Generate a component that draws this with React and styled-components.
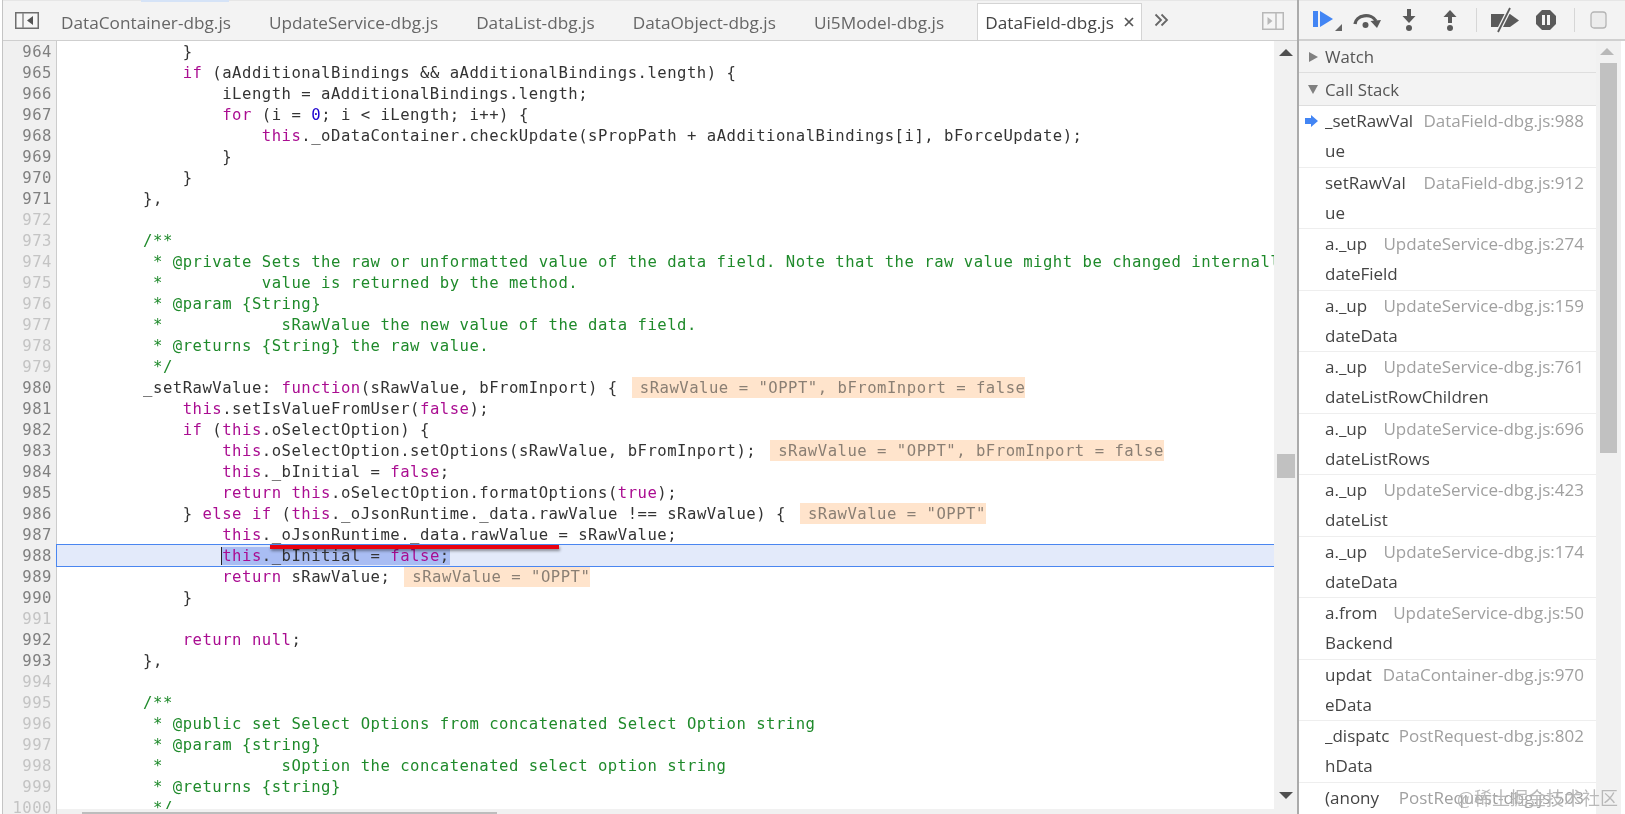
import React from "react";
import styled, { createGlobalStyle } from "styled-components";

const Global = createGlobalStyle`
  html, body { margin: 0; padding: 0; height: 100%; overflow: hidden; background: #fff; }
  #root { height: 814px; }
`;

const Page = styled.div`
  position: relative;
  width: 1625px;
  height: 814px;
  display: flex;
  overflow: hidden;
  background: #fff;
  font-family: "Open Sans", "Noto Sans", sans-serif;
  filter: blur(0.35px);
`;

const SourcePane = styled.div`
  flex: none;
  width: 1295px;
  margin-left: 2px;
  box-sizing: border-box;
  display: flex;
  flex-direction: column;
  border-left: 1px solid #c4c4c4;
`;

const TabBar = styled.div`
  height: 41px;
  flex: none;
  box-sizing: border-box;
  display: flex;
  align-items: flex-end;
  background: #f3f3f3;
  border-top: 1px solid #e6e6e6;
  border-bottom: 1px solid #cfcfcf;
  position: relative;
`;

const LoadingStrip = styled.div`
  position: absolute;
  left: 138px;
  top: -1px;
  width: 88px;
  height: 2px;
  background: #d5e3f7;
`;

const IconSlot = styled.div`
  width: ${(p) => p.$w}px;
  margin-left: ${(p) => p.$ml};
  margin-right: ${(p) => p.$mr || 0}px;
  flex: none;
  align-self: center;
  display: flex;
  align-items: center;
  justify-content: center;
`;

const Tab = styled.div`
  flex: none;
  box-sizing: border-box;
  height: 37px;
  margin-left: ${(p) => p.$ml}px;
  padding: 0 ${(p) => (p.$active ? 7 : 0)}px;
  display: flex;
  align-items: center;
  gap: 10px;
  font-size: 17.2px;
  letter-spacing: 0.02px;
  color: ${(p) => (p.$active ? "#444" : "#666")};
  background: ${(p) => (p.$active ? "#fff" : "transparent")};
  border: ${(p) => (p.$active ? "1px solid #d4d4d4" : "1px solid transparent")};
  border-bottom: none;
`;

const More = styled.svg`
  flex: none;
  display: block;
  align-self: flex-start;
  margin: 12px 0 0 12px;
`;

const EditorBody = styled.div`
  flex: 1;
  min-height: 0;
  display: flex;
  position: relative;
`;

const Code = styled.div`
  flex: 1;
  min-width: 0;
  overflow: hidden;
  font-family: "DejaVu Sans Mono", "Liberation Mono", monospace;
  font-size: 15.6px;
  letter-spacing: 0.5px;
  color: #333;
`;

const Row = styled.div`
  height: 21px;
  line-height: 22px;
  display: flex;
  white-space: pre;
  position: relative;
  ${(p) => p.$current && `z-index: 1;`}
`;

const Gutter = styled.div`
  width: 54px;
  flex: none;
  box-sizing: border-box;
  padding-right: 4px;
  text-align: right;
  background: #f0f0f0;
  border-right: 1px solid #cccccc;
  color: ${(p) => (p.$dim ? "#c4c4c4" : "#808080")};
`;

const Line = styled.div`
  flex: 1;
  min-width: 0;
  padding-left: 7px;
  overflow: hidden;
  box-sizing: border-box;
  ${(p) =>
    p.$current &&
    `
    background: #e3eafa;
    box-shadow: 0 0 0 1px #4a86f0;
  `}
`;

const Keyword = styled.span`color: #aa0d91;`;
const Num = styled.span`color: #1c00cf;`;
const Comment = styled.span`color: #1f8a2b;`;
const Selected = styled.span`
  background: #a9bdf3;
  box-shadow: -1px 0 0 #222;
`;
const Pill = styled.span`
  display: inline-block;
  margin-left: 14px;
  padding-left: 8px;
  background: #ffe4cc;
  color: #8a7f74;
`;

const VScroll = styled.div`
  width: 23px;
  flex: none;
  background: #f1f1f1;
  position: relative;
`;

const Thumb = styled.div`
  width: 18px;
  height: 24px;
  background: #c1c1c1;
  position: absolute;
  top: 413px;
  left: 3px;
`;

const Arrow = styled.div`
  position: absolute;
  top: ${(p) => p.$top}px;
  left: ${(p) => p.$left}px;
  width: 0;
  height: 0;
  border-left: 7px solid transparent;
  border-right: 7px solid transparent;
  ${(p) =>
    p.$down
      ? `border-top: 7px solid ${p.$c || "#505050"};`
      : `border-bottom: 7px solid ${p.$c || "#505050"};`}
`;

const HScroll = styled.div`
  position: absolute;
  left: 54px;
  right: 23px;
  bottom: 0;
  height: 5px;
  z-index: 2;
  background: #f1f1f1;
  display: flex;
  align-items: flex-end;
  padding-left: 25px;
`;

const HThumb = styled.div`
  height: 2px;
  width: 415px;
  background: #bdbdbd;
`;

const Sidebar = styled.div`
  flex: 1;
  min-width: 0;
  display: flex;
  flex-direction: column;
  border-left: 2px solid #ababab;
`;

const DebugBar = styled.div`
  height: 41px;
  flex: none;
  box-sizing: border-box;
  background: #f3f3f3;
  border-bottom: 2px solid #d0d0d0;
  border-top: 1px solid #e6e6e6;
  display: flex;
  align-items: center;
  padding-left: 14px;
`;

const ToolIcon = styled.svg`
  flex: none;
  margin-left: ${(p) => p.$ml || 0}px;
  margin-top: -1px;
  display: block;
`;

const ToolSep = styled.div`
  width: 1px;
  height: 24px;
  flex: none;
  background: #d6d6d6;
  margin-left: ${(p) => p.$ml}px;
`;

const SideBody = styled.div`
  flex: 1;
  min-height: 0;
  display: flex;
`;

const SideMain = styled.div`
  width: 297px;
  flex: none;
  overflow: hidden;
`;

const SectionHead = styled.div`
  height: ${(p) => p.$h}px;
  box-sizing: border-box;
  background: #f3f3f3;
  border-bottom: 1px solid #dedede;
  display: flex;
  align-items: center;
  gap: 7px;
  padding-left: 9px;
  font-size: 16.8px;
  color: #555;
`;

const Caret = styled.span`
  width: 0;
  height: 0;
  flex: none;
  ${(p) =>
    p.$open
      ? `border-left: 5px solid transparent; border-right: 5px solid transparent; border-top: 9px solid #808080;`
      : `border-top: 5px solid transparent; border-bottom: 5px solid transparent; border-left: 9px solid #808080; margin-left: 1px;`}
`;

const Frame = styled.div`
  height: 61.55px;
  box-sizing: border-box;
  padding: 0 12px 0 26px;
  border-bottom: 1px solid #eeeeee;
  font-size: 17px;
  line-height: 30px;
  color: #444;
  position: relative;
`;

const FrameTop = styled.div`
  display: flex;
  justify-content: space-between;
  white-space: nowrap;
`;

const FrameFile = styled.span`
  color: #a0a0a0;
`;

const FrameMarker = styled.svg`
  position: absolute;
  left: 6px;
  top: 9px;
`;

const SideScroll = styled.div`
  width: 25px;
  flex: none;
  background: #f1f1f1;
  position: relative;
`;

const SideThumb = styled.div`
  position: absolute;
  top: 22px;
  left: 4px;
  width: 17px;
  height: 390px;
  background: #c1c1c1;
`;

const Watermark = styled.div`
  position: absolute;
  right: 7px;
  bottom: 5px;
  font-family: "Noto Sans CJK SC", sans-serif;
  font-size: 18px;
  line-height: 24px;
  color: rgba(130, 130, 130, 0.55);
  text-shadow: 0 0 1px rgba(255, 255, 255, 0.8);
  white-space: nowrap;
`;

const RedMark = styled.div`
  position: absolute;
  left: 270px;
  top: 545px;
  width: 289px;
  height: 4px;
  background: #e8000f;
  box-shadow: 1px 2px 3px rgba(0, 0, 0, 0.4);
  z-index: 3;
`;

const pillBoth = 'sRawValue = "OPPT", bFromInport = false';
const pillOne = 'sRawValue = "OPPT"';

const lines = [
  [964, "            }"],
  [965, "            if (aAdditionalBindings && aAdditionalBindings.length) {"],
  [966, "                iLength = aAdditionalBindings.length;"],
  [967, "                for (i = 0; i < iLength; i++) {"],
  [968, "                    this._oDataContainer.checkUpdate(sPropPath + aAdditionalBindings[i], bForceUpdate);"],
  [969, "                }"],
  [970, "            }"],
  [971, "        },"],
  [972, "", { dim: true }],
  [973, "        /**", { c: true, dim: true }],
  [974, "         * @private Sets the raw or unformatted value of the data field. Note that the raw value might be changed internally", { c: true, dim: true }],
  [975, "         *          value is returned by the method.", { c: true, dim: true }],
  [976, "         * @param {String}", { c: true, dim: true }],
  [977, "         *            sRawValue the new value of the data field.", { c: true, dim: true }],
  [978, "         * @returns {String} the raw value.", { c: true, dim: true }],
  [979, "         */", { c: true, dim: true }],
  [980, "        _setRawValue: function(sRawValue, bFromInport) {", { pill: pillBoth }],
  [981, "            this.setIsValueFromUser(false);"],
  [982, "            if (this.oSelectOption) {"],
  [983, "                this.oSelectOption.setOptions(sRawValue, bFromInport);", { pill: pillBoth }],
  [984, "                this._bInitial = false;"],
  [985, "                return this.oSelectOption.formatOptions(true);"],
  [986, "            } else if (this._oJsonRuntime._data.rawValue !== sRawValue) {", { pill: pillOne }],
  [987, "                this._oJsonRuntime._data.rawValue = sRawValue;"],
  [988, "                this._bInitial = false;", { current: true }],
  [989, "                return sRawValue;", { pill: pillOne }],
  [990, "            }"],
  [991, "", { dim: true }],
  [992, "            return null;"],
  [993, "        },"],
  [994, "", { dim: true }],
  [995, "        /**", { c: true, dim: true }],
  [996, "         * @public set Select Options from concatenated Select Option string", { c: true, dim: true }],
  [997, "         * @param {string}", { c: true, dim: true }],
  [998, "         *            sOption the concatenated select option string", { c: true, dim: true }],
  [999, "         * @returns {string}", { c: true, dim: true }],
  [1000, "         */", { c: true, dim: true }],
];

const frames = [
  ["_setRawVal", "ue", "DataField-dbg.js:988", true],
  ["setRawVal", "ue", "DataField-dbg.js:912"],
  ["a._up", "dateField", "UpdateService-dbg.js:274"],
  ["a._up", "dateData", "UpdateService-dbg.js:159"],
  ["a._up", "dateListRowChildren", "UpdateService-dbg.js:761"],
  ["a._up", "dateListRows", "UpdateService-dbg.js:696"],
  ["a._up", "dateList", "UpdateService-dbg.js:423"],
  ["a._up", "dateData", "UpdateService-dbg.js:174"],
  ["a.from", "Backend", "UpdateService-dbg.js:50"],
  ["updat", "eData", "DataContainer-dbg.js:970"],
  ["_dispatc", "hData", "PostRequest-dbg.js:802"],
  ["(anony", "mous", "PostRequest-dbg.js:503"],
];

function highlight(text) {
  return text.split(/(\b(?:this|if|else|for|return|function|false|true|null)\b|\b\d+\b)/).map((part, i) => {
    if (/^(this|if|else|for|return|function|false|true|null)$/.test(part)) return <Keyword key={i}>{part}</Keyword>;
    if (/^\d+$/.test(part)) return <Num key={i}>{part}</Num>;
    return part;
  });
}

function LineContent({ text, opts }) {
  if (opts.c) return <Comment>{text}</Comment>;
  if (opts.current) {
    const indent = text.match(/^ */)[0];
    return (
      <>
        {indent}
        <Selected>{highlight(text.slice(indent.length))}</Selected>
      </>
    );
  }
  return (
    <>
      {highlight(text)}
      {opts.pill ? <Pill>{opts.pill}</Pill> : null}
    </>
  );
}

const NavLeftIcon = () => (
  <svg width="24" height="17" viewBox="0 0 24 17">
    <rect x="0.75" y="0.75" width="22.5" height="15.5" fill="#f7f7f7" stroke="#6f6f6f" strokeWidth="1.5" />
    <line x1="8" y1="1" x2="8" y2="16" stroke="#8a8a8a" strokeWidth="1.5" />
    <path d="M18 4 L12 8.5 L18 13 Z" fill="#555" />
  </svg>
);

const NavRightIcon = () => (
  <svg width="22" height="18" viewBox="0 0 22 18">
    <rect x="0.75" y="0.75" width="20.5" height="16.5" fill="#f5f5f5" stroke="#b8b8b8" strokeWidth="1.5" />
    <line x1="14" y1="1" x2="14" y2="17" stroke="#b8b8b8" strokeWidth="1.5" />
    <path d="M5.5 5 L10.5 9 L5.5 13 Z" fill="#b8b8b8" />
  </svg>
);

const CloseIcon = () => (
  <svg width="10" height="10" viewBox="0 0 10 10">
    <path d="M1 1 L9 9 M9 1 L1 9" stroke="#555" strokeWidth="1.7" />
  </svg>
);

export default function App() {
  return (
    <>
      <Global />
      <Page>
        <SourcePane>
          <TabBar>
            <LoadingStrip />
            <IconSlot $w={24} $ml="12px">
              <NavLeftIcon />
            </IconSlot>
            <Tab $ml={21}>DataContainer-dbg.js</Tab>
            <Tab $ml={36}>UpdateService-dbg.js</Tab>
            <Tab $ml={36}>DataList-dbg.js</Tab>
            <Tab $ml={36}>DataObject-dbg.js</Tab>
            <Tab $ml={36}>Ui5Model-dbg.js</Tab>
            <Tab $ml={32} $active>
              DataField-dbg.js
              <CloseIcon />
            </Tab>
            <More width="15" height="14" viewBox="0 0 15 14">
              <path d="M1.5 1.5 L7 7 L1.5 12.5 M7.5 1.5 L13 7 L7.5 12.5" fill="none" stroke="#666" strokeWidth="1.8" />
            </More>
            <IconSlot $w={22} $ml="auto" $mr={13}>
              <NavRightIcon />
            </IconSlot>
          </TabBar>
          <EditorBody>
            <Code>
              {lines.map(([n, text, opts = {}]) => (
                <Row key={n} $current={opts.current}>
                  <Gutter $dim={opts.dim}>{n}</Gutter>
                  <Line $current={opts.current}>
                    <LineContent text={text} opts={opts} />
                  </Line>
                </Row>
              ))}
            </Code>
            <VScroll>
              <Arrow $top={8} $left={5} />
              <Thumb />
              <Arrow $top={751} $left={5} $down />
            </VScroll>
            <HScroll>
              <HThumb />
            </HScroll>
          </EditorBody>
        </SourcePane>
        <Sidebar>
          <DebugBar>
            <ToolIcon width="31" height="24" viewBox="0 0 31 24">
              <rect x="0" y="3" width="5" height="16" fill="#4285f4" />
              <path d="M7 3 L20 11 L7 19 Z" fill="#4285f4" />
              <path d="M29 16 L29 23 L22 23 Z" fill="#666" />
            </ToolIcon>
            <ToolIcon $ml={8} width="30" height="22" viewBox="0 0 30 22">
              <path d="M3 15 A11 9 0 0 1 24 12" fill="none" stroke="#5a5a5a" strokeWidth="3.4" />
              <path d="M18.5 12 L29 11 L25 19 Z" fill="#5a5a5a" />
              <circle cx="13.5" cy="16" r="3" fill="#5a5a5a" />
            </ToolIcon>
            <ToolIcon $ml={19} width="16" height="24" viewBox="0 0 16 24">
              <rect x="6" y="1" width="4" height="8" fill="#5a5a5a" />
              <path d="M1.5 8 L14.5 8 L8 15 Z" fill="#5a5a5a" />
              <circle cx="8" cy="20" r="3" fill="#5a5a5a" />
            </ToolIcon>
            <ToolIcon $ml={25} width="16" height="24" viewBox="0 0 16 24">
              <path d="M1.5 9 L14.5 9 L8 2 Z" fill="#5a5a5a" />
              <rect x="6" y="8" width="4" height="7" fill="#5a5a5a" />
              <circle cx="8" cy="20" r="3" fill="#5a5a5a" />
            </ToolIcon>
            <ToolSep $ml={18} />
            <ToolIcon $ml={13} width="30" height="26" viewBox="0 0 30 26">
              <path d="M1 7 L20 7 L29 13.5 L20 20 L1 20 Z" fill="#5a5a5a" />
              <path d="M20 1 L8 25" stroke="#f3f3f3" strokeWidth="4.5" />
              <path d="M20 1 L8 25" stroke="#5a5a5a" strokeWidth="1.8" />
            </ToolIcon>
            <ToolIcon $ml={15} width="22" height="22" viewBox="0 0 22 22">
              <path d="M7 1 L15 1 L21 7 L21 15 L15 21 L7 21 L1 15 L1 7 Z" fill="#5a5a5a" />
              <rect x="7" y="6" width="3" height="10" fill="#f3f3f3" />
              <rect x="12" y="6" width="3" height="10" fill="#f3f3f3" />
            </ToolIcon>
            <ToolSep $ml={17} />
            <ToolIcon $ml={15} width="17" height="18" viewBox="0 0 17 18">
              <rect x="1" y="1" width="15" height="16" rx="3" fill="#ececec" stroke="#b4b4b4" strokeWidth="1.3" />
            </ToolIcon>
          </DebugBar>
          <SideBody>
            <SideMain>
              <SectionHead $h={32}>
                <Caret />
                Watch
              </SectionHead>
              <SectionHead $h={33}>
                <Caret $open />
                Call Stack
              </SectionHead>
              {frames.map(([a, b, file, cur]) => (
                <Frame key={file}>
                  {cur && (
                    <FrameMarker width="13" height="12" viewBox="0 0 13 12">
                      <path d="M0 3 L6 3 L6 0 L13 6 L6 12 L6 9 L0 9 Z" fill="#4285f4" />
                    </FrameMarker>
                  )}
                  <FrameTop>
                    <span>{a}</span>
                    <FrameFile>{file}</FrameFile>
                  </FrameTop>
                  <div>{b}</div>
                </Frame>
              ))}
            </SideMain>
            <SideScroll>
              <Arrow $top={7} $left={4} $c="#b8b8b8" />
              <SideThumb />
            </SideScroll>
          </SideBody>
        </Sidebar>
        <RedMark />
        <Watermark>@稀土掘金技术社区</Watermark>
      </Page>
    </>
  );
}
